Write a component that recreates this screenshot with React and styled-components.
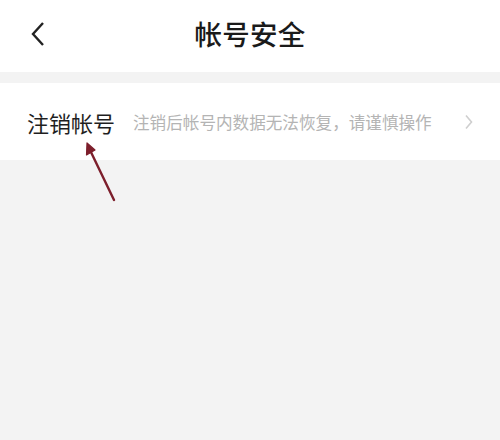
import React from 'react';
import styled, { createGlobalStyle } from 'styled-components';

const GlobalStyle = createGlobalStyle`
  html, body {
    margin: 0;
    padding: 0;
    background: #f3f3f3;
  }
  body {
    font-family: "Noto Sans CJK SC", "Noto Sans", sans-serif;
  }
`

const Page = styled.div`
  position: relative;
  width: 500px;
  height: 440px;
  background: #f3f3f3;
  overflow: hidden;
`

const Header = styled.div`
  height: 72px;
  padding-bottom: 6px;
  box-sizing: border-box;
  background: #ffffff;
  display: flex;
  align-items: center;
  justify-content: center;
  position: relative;
`

const BackButton = styled.div`
  position: absolute;
  left: 30px;
  top: 21px;
  width: 16px;
  height: 26px;
  display: flex;
  align-items: center;
`

const Title = styled.h1`
  margin: 0;
  font-size: 27.5px;
  font-weight: 500;
  color: #1a1a1a;
  letter-spacing: 0.3px;
`

const Section = styled.div`
  margin-top: 11px;
  background: #ffffff;
`

const Row = styled.div`
  height: 77px;
  display: flex;
  align-items: center;
  padding: 0 26px 0 27px;
`

const RowLabel = styled.span`
  font-size: 22px;
  color: #1f1f1f;
  white-space: nowrap;
`

const RowHint = styled.span`
  margin-left: 18px;
  flex: 1;
  font-size: 16.6px;
  color: #b4b4b4;
  white-space: nowrap;
`

const Chevron = styled.div`
  width: 10px;
  height: 16px;
  display: flex;
  align-items: center;
`

const Arrow = styled.svg`
  position: absolute;
  left: 80px;
  top: 136px;
  pointer-events: none;
`

const App = () => {
  return (
    <Page>
      <GlobalStyle/>
      <Header>
        <BackButton>
          <svg width="16" height="26" viewBox="0 0 16 26">
            <path d="M13 2 L3 13 L13 24" fill="none" stroke="#222" strokeWidth="2.4" />
          </svg>
        </BackButton>
        <Title>帐号安全</Title>
      </Header>
      <Section>
        <Row>
          <RowLabel>注销帐号</RowLabel>
          <RowHint>注销后帐号内数据无法恢复，请谨慎操作</RowHint>
          <Chevron>
            <svg width="10" height="16" viewBox="0 0 10 16">
              <path d="M2 1.5 L7.5 8 L2 14.5" fill="none" stroke="#cfcfcf" strokeWidth="1.6" />
            </svg>
          </Chevron>
        </Row>
      </Section>
      <Arrow width="50" height="70" viewBox="0 0 50 70">
        <path d="M9 12 L34 64" fill="none" stroke="#7d1f2c" strokeWidth="2.4" strokeLinecap="round" />
        <path d="M7 7 L6.5 19 L15 14 Z" fill="#7d1f2c" stroke="#7d1f2c" strokeWidth="1.2" strokeLinejoin="round" />
      </Arrow>
    </Page>
  )
}

export default App;
